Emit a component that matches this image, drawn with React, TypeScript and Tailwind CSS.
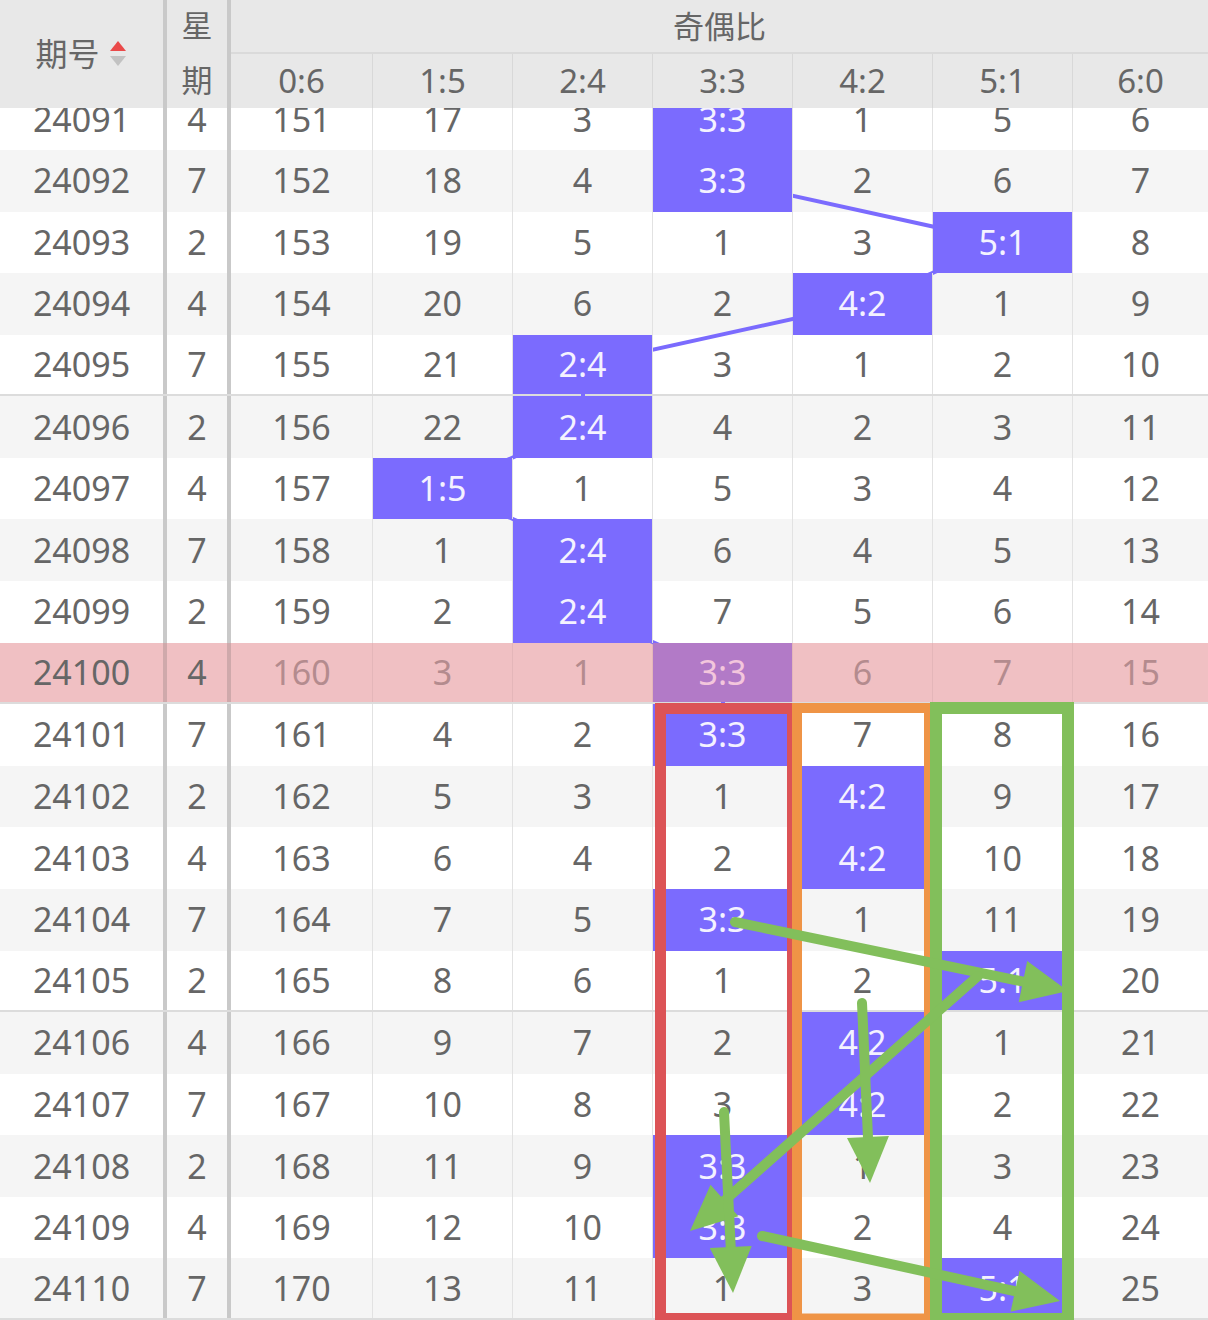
import React from 'react';

const COLS = ['0:6', '1:5', '2:4', '3:3', '4:2', '5:1', '6:0'];
const COL_W = ['w-[142px]', 'w-[140px]', 'w-[140px]', 'w-[140px]', 'w-[140px]', 'w-[140px]', 'flex-1'];
const CENTERS = [302, 443, 583, 723, 863, 1003, 1140.5];
const ROW_H = 61.58;

// [期号, 星期, 命中列, 各列数值]
const ROWS: [string, string, number, (string | number)[]][] = [
  ['24091', '4', 3, [151, 17, 3, '', 1, 5, 6]],
  ['24092', '7', 3, [152, 18, 4, '', 2, 6, 7]],
  ['24093', '2', 5, [153, 19, 5, 1, 3, '', 8]],
  ['24094', '4', 4, [154, 20, 6, 2, '', 1, 9]],
  ['24095', '7', 2, [155, 21, '', 3, 1, 2, 10]],
  ['24096', '2', 2, [156, 22, '', 4, 2, 3, 11]],
  ['24097', '4', 1, [157, '', 1, 5, 3, 4, 12]],
  ['24098', '7', 2, [158, 1, '', 6, 4, 5, 13]],
  ['24099', '2', 2, [159, 2, '', 7, 5, 6, 14]],
  ['24100', '4', 3, [160, 3, 1, '', 6, 7, 15]],
  ['24101', '7', 3, [161, 4, 2, '', 7, 8, 16]],
  ['24102', '2', 4, [162, 5, 3, 1, '', 9, 17]],
  ['24103', '4', 4, [163, 6, 4, 2, '', 10, 18]],
  ['24104', '7', 3, [164, 7, 5, '', 1, 11, 19]],
  ['24105', '2', 5, [165, 8, 6, 1, 2, '', 20]],
  ['24106', '4', 4, [166, 9, 7, 2, '', 1, 21]],
  ['24107', '7', 4, [167, 10, 8, 3, '', 2, 22]],
  ['24108', '2', 3, [168, 11, 9, '', 1, 3, 23]],
  ['24109', '4', 3, [169, 12, 10, '', 2, 4, 24]],
  ['24110', '7', 5, [170, 13, 11, 1, 3, '', 25]],
];

const ARROWS: [number, number, number, number][] = [
  [735, 922, 1068, 991],
  [978, 976, 690, 1231],
  [862, 1003, 870, 1183],
  [724, 1112, 733, 1293],
  [762, 1236, 1060, 1301],
];

function Arrow({ x1, y1, x2, y2 }: { x1: number; y1: number; x2: number; y2: number }) {
  const dx = x2 - x1;
  const dy = y2 - y1;
  const len = Math.hypot(dx, dy);
  const ux = dx / len;
  const uy = dy / len;
  const head = 46;
  const half = 21;
  const bx = x2 - ux * head;
  const by = y2 - uy * head;
  const pts = `${x2},${y2} ${bx - uy * half},${by + ux * half} ${bx + uy * half},${by - ux * half}`;
  return (
    <g>
      <line x1={x1} y1={y1} x2={bx + ux * 4} y2={by + uy * 4} stroke="#82bf5b" strokeWidth={10} strokeLinecap="round" />
      <polygon points={pts} fill="#82bf5b" />
    </g>
  );
}

function SortIcon() {
  return (
    <svg width="20" height="32" viewBox="0 0 20 32">
      <polygon points="10,3 18,13 2,13" fill="#ea4a4a" />
      <polygon points="2,18 18,18 10,28" fill="#c2c2c2" />
    </svg>
  );
}

export default function App() {
  const linePts = ROWS.slice(0, 11)
    .map((r, i) => `${CENTERS[r[2]]},${i * ROW_H + ROW_H / 2}`)
    .join(' ');

  return (
    <div
      className="relative w-[1208px] h-[1320px] overflow-hidden bg-white text-[#666]"
      style={{ fontFamily: '"Noto Sans", "Noto Sans CJK SC", sans-serif' }}
    >
      {/* header */}
      <div className="flex h-[108px] bg-[#e8e8e8]">
        <div className="w-[163px] flex items-center justify-center gap-2 text-[32px]">
          <span>期号</span>
          <SortIcon />
        </div>
        <div className="w-[4px] bg-[#c9c9c9]" />
        <div className="w-[60px] flex flex-col items-center text-[31px]">
          <span className="h-[52px] leading-[50px]">星</span>
          <span className="h-[56px] leading-[56px]">期</span>
        </div>
        <div className="w-[4px] bg-[#c9c9c9]" />
        <div className="flex-1 flex flex-col">
          <div className="h-[54px] flex items-center justify-center text-[31px] border-b-2 border-[#dadada]">
            奇偶比
          </div>
          <div className="flex flex-1">
            {COLS.map((c, j) => (
              <div
                key={c}
                className={`${COL_W[j]} flex items-center justify-center text-[33px] ${j < 6 ? 'border-r border-[#d8d8d8]' : ''}`}
              >
                {c}
              </div>
            ))}
          </div>
        </div>
      </div>

      {/* body */}
      <div className="h-[1212px] overflow-hidden">
        <div className="relative -mt-[19.6px]">
          <svg className="absolute left-0 top-0 z-10" width="1208" height="1240">
            <polyline points={linePts} fill="none" stroke="#7b6bfe" strokeWidth={4} />
          </svg>
          {ROWS.map(([issue, week, hit, vals], i) => {
            const pink = issue === '24100';
            const rowBg = pink ? 'bg-[#f0c0c3]' : i % 2 === 1 ? 'bg-[#f5f5f5]' : 'bg-white';
            const sep = (i + 1) % 5 === 0 ? 'border-b-2 border-[#dcdcdc]' : '';
            return (
              <div key={issue} className={`flex h-[61.58px] text-[34px] ${rowBg} ${sep}`}>
                <div className="w-[163px] flex items-center justify-center">{issue}</div>
                <div className={`w-[4px] ${pink ? 'bg-[#cfa9ab]' : 'bg-[#c9c9c9]'}`} />
                <div className="w-[60px] flex items-center justify-center">{week}</div>
                <div className={`w-[4px] ${pink ? 'bg-[#cfa9ab]' : 'bg-[#c9c9c9]'}`} />
                {vals.map((v, j) => {
                  const isHit = j === hit;
                  const border = j < 6 ? (pink ? 'border-r border-[#e4b6b9]' : 'border-r border-[#e2e2e2]') : '';
                  if (isHit) {
                    return (
                      <div
                        key={j}
                        className={`${COL_W[j]} ${border} relative z-20 flex items-center justify-center ${
                          pink ? 'bg-[#b27ac7] text-[#f3c6dc]' : 'bg-[#7b6bfe] text-[#f4f2ff]'
                        }`}
                      >
                        {COLS[j]}
                      </div>
                    );
                  }
                  return (
                    <div
                      key={j}
                      className={`${COL_W[j]} ${border} flex items-center justify-center ${pink ? 'text-[#b48b8e]' : ''}`}
                    >
                      {v}
                    </div>
                  );
                })}
              </div>
            );
          })}
        </div>
      </div>

      {/* markup overlay */}
      <svg className="absolute left-0 top-0 z-30 pointer-events-none" width="1208" height="1320">
        <rect x={660.5} y={708.5} width={132} height={610} fill="none" stroke="#dc5356" strokeWidth={11} />
        <rect x={797} y={708} width={132} height={610.5} fill="none" stroke="#ef9446" strokeWidth={10} />
        <rect x={936} y={708} width={132} height={611} fill="none" stroke="#82bf5b" strokeWidth={12} />
        {ARROWS.map(([x1, y1, x2, y2], k) => (
          <Arrow key={k} x1={x1} y1={y1} x2={x2} y2={y2} />
        ))}
      </svg>
    </div>
  );
}
